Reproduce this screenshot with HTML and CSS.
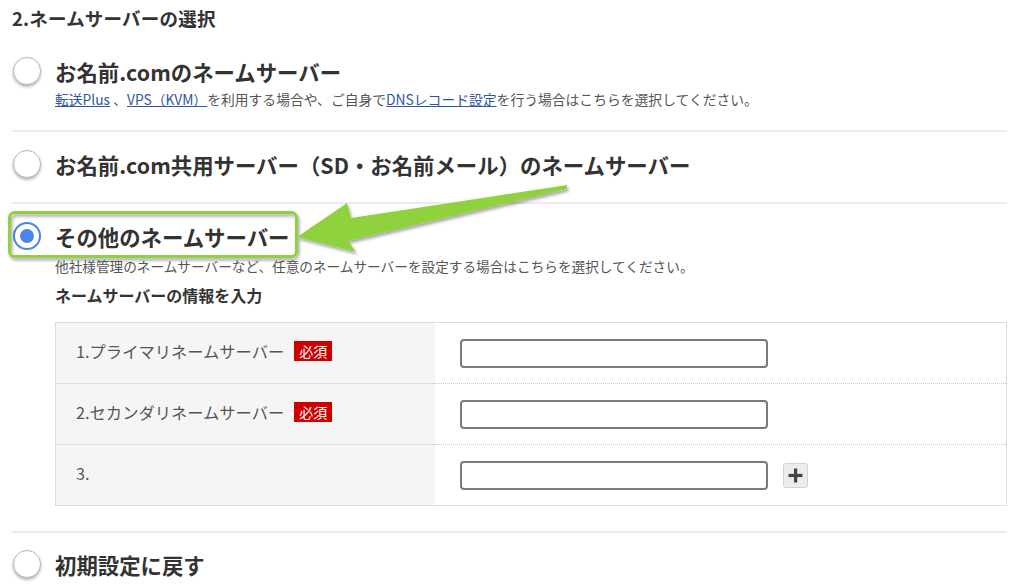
FILE: index.html
```html
<!DOCTYPE html>
<html lang="ja">
  <head>
    <meta charset="UTF-8" />
    <meta name="viewport" content="width=device-width, initial-scale=1.0" />
    <title>ネームサーバーの選択</title>
    <link rel="stylesheet" href="styles.css">
  </head>
  <body>
    <div class="section">
      <h2>2.ネームサーバーの選択</h2>

      <div class="option">
        <label class="opt-head">
          <input type="radio" name="ns" />
          <span>お名前.comのネームサーバー</span>
        </label>
        <p class="opt-desc">
          <a href="#">転送Plus</a> 、<a href="#">VPS（KVM）</a>を利用する場合や、ご自身で<a href="#">DNSレコード設定</a>を行う場合はこちらを選択してください。
        </p>
      </div>

      <div class="option opt-2">
        <label class="opt-head">
          <input type="radio" name="ns" />
          <span>お名前.com共用サーバー（SD・お名前メール）のネームサーバー</span>
        </label>
      </div>

      <div class="option opt-3">
        <label class="opt-head">
          <input type="radio" name="ns" checked />
          <span>その他のネームサーバー</span>
        </label>
        <p class="opt-desc desc-3">他社様管理のネームサーバーなど、任意のネームサーバーを設定する場合はこちらを選択してください。</p>
        <p class="sub-title">ネームサーバーの情報を入力</p>
        <table class="ns-table">
          <tr>
            <th>1.プライマリネームサーバー<span class="req">必須</span></th>
            <td><input type="text" class="ns-input" /></td>
          </tr>
          <tr>
            <th>2.セカンダリネームサーバー<span class="req">必須</span></th>
            <td><input type="text" class="ns-input" /></td>
          </tr>
          <tr>
            <th>3.</th>
            <td>
              <input type="text" class="ns-input" /><button class="add-btn" type="button">
                <svg width="15" height="15" viewBox="0 0 15 15">
                  <rect x="6" y="0.5" width="3.2" height="14" fill="#444" />
                  <rect x="0.5" y="5.9" width="14" height="3.2" fill="#444" />
                </svg>
              </button>
            </td>
          </tr>
        </table>
      </div>

      <div class="option opt-4">
        <label class="opt-head">
          <input type="radio" name="ns" />
          <span>初期設定に戻す</span>
        </label>
      </div>
    </div>

    <!-- annotation overlay -->
    <svg class="annot" width="1024" height="584" viewBox="0 0 1024 584">
      <defs>
        <filter id="shadow" x="-10%" y="-30%" width="130%" height="170%">
          <feDropShadow dx="1.5" dy="2.5" stdDeviation="1.6" flood-color="#000" flood-opacity="0.35" />
        </filter>
      </defs>
      <rect x="9.5" y="212.5" width="287" height="44" rx="5" fill="none"
        stroke="#8fd23c" stroke-width="3" filter="url(#shadow)" />
      <polygon points="297,237 347,203 351,218 567,185 567,189 348,241 356,252"
        fill="#8fd23c" filter="url(#shadow)" />
    </svg>
  </body>
</html>
```

FILE: styles.css
```css
body {
  margin: 0;
  font-family: "Noto Sans CJK JP", "Noto Sans", sans-serif;
  color: #333;
  background: #fff;
  position: relative;
  width: 1024px;
  height: 584px;
  overflow: hidden;
}
.section {
  padding: 0 17px 0 12px;
}
h2 {
  margin: 0;
  font-size: 18.5px;
  line-height: 36px;
  font-weight: bold;
  letter-spacing: 0.2px;
}
.option {
  padding: 20px 0 22px;
  border-bottom: 2px solid #ececec;
}
.opt-2 {
  padding: 17px 0 23px;
}
.opt-3 {
  padding: 17px 0 25px;
}
.opt-4 {
  padding: 16px 0 20px;
  border-bottom: none;
}
.opt-head {
  display: flex;
  align-items: center;
  height: 30px;
  gap: 14px;
  font-size: 21.4px;
  font-weight: bold;
  color: #333;
}
.opt-head input {
  appearance: none;
  -webkit-appearance: none;
  margin: 0 0 0 1px;
  width: 28px;
  height: 28px;
  border-radius: 50%;
  border: 1.5px solid #b8b8b8;
  background: #fff;
  box-shadow: 0 2px 3px rgba(0, 0, 0, 0.28);
  flex: none;
  display: grid;
  place-items: center;
}
.opt-head input:checked {
  border: 2.5px solid #4a86e8;
  box-shadow: none;
}
.opt-head input:checked::after {
  content: "";
  width: 14px;
  height: 14px;
  border-radius: 50%;
  background: #4a86e8;
}
.opt-desc {
  margin: 4px 0 0 43px;
  font-size: 13.8px;
  line-height: 18px;
  color: #555;
}
.opt-desc a {
  color: #2f55a4;
  text-decoration: underline;
}
.desc-3 {
  margin-top: 6px;
  font-size: 13.65px;
}
.sub-title {
  margin: 10px 0 0 43px;
  font-size: 16px;
  line-height: 20px;
  font-weight: bold;
  color: #333;
}
.ns-table {
  margin: 17px 0 0 43px;
  width: 952px;
  border-collapse: collapse;
  border: 1px solid #dcdcdc;
}
.ns-table tr {
  height: 61px;
}
.ns-table tr + tr th,
.ns-table tr + tr td {
  border-top: 1px dotted #c8c8c8;
}
.ns-table th {
  width: 359px;
  padding: 0 0 4px 20px;
  background: #f5f5f5;
  text-align: left;
  font-weight: normal;
  font-size: 16.3px;
  color: #555;
}
.ns-table td {
  padding: 0 0 0 25px;
  vertical-align: middle;
}
.req {
  display: inline-block;
  margin-left: 10px;
  padding: 0 5px;
  height: 20px;
  line-height: 20px;
  background: #cc0000;
  color: #fff;
  font-size: 14px;
  vertical-align: 1px;
}
.ns-input {
  width: 308px;
  height: 29px;
  box-sizing: border-box;
  border: 2px solid #7a7a7a;
  border-radius: 4px;
  vertical-align: middle;
  padding: 0 6px;
}
.add-btn {
  margin-left: 15px;
  width: 25px;
  height: 25px;
  padding: 0;
  border: 1px solid #d2d2d2;
  border-radius: 3px;
  background: #ececec;
  vertical-align: middle;
  display: inline-grid;
  place-items: center;
}
.annot {
  position: absolute;
  top: 0;
  left: 0;
  pointer-events: none;
}
```
